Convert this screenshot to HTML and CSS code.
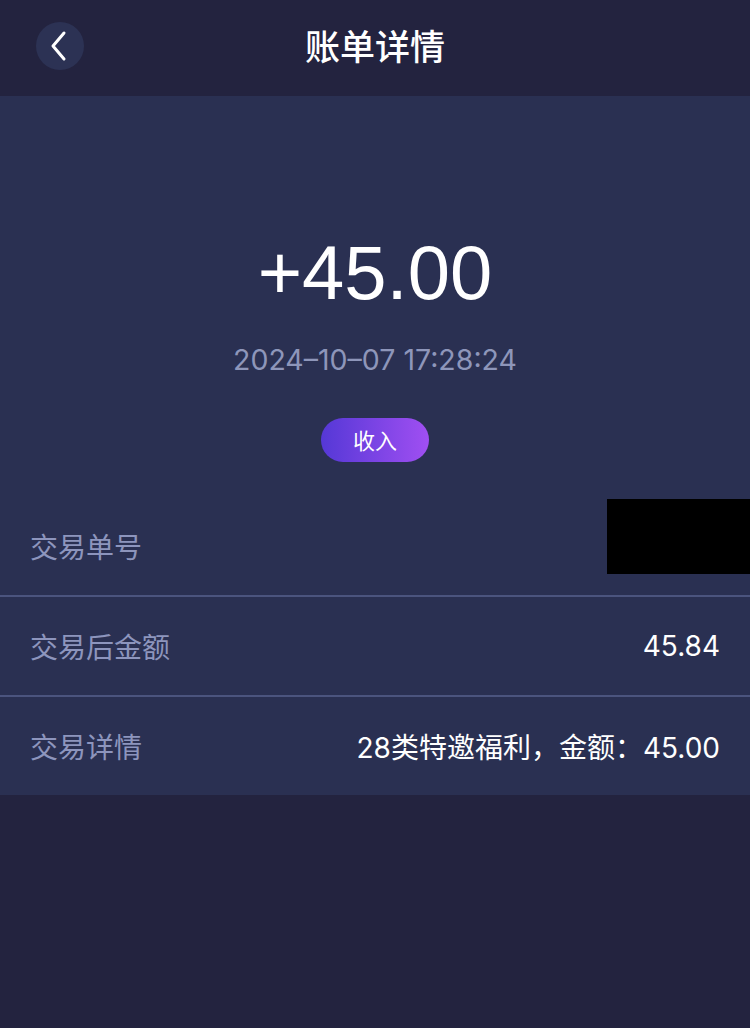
FILE: index.html
```html
<!DOCTYPE html>
<html lang="zh-CN">
<head>
    <meta charset="UTF-8">
    <meta name="viewport" content="width=device-width, initial-scale=1.0">
    <title>账单详情</title>
    <link rel="stylesheet" href="styles.css">
</head>
<body>
    <div class="header">
        <div class="back">
            <svg width="20" height="32" viewBox="0 0 20 32">
                <path d="M15 3 L4 16 L15 29" fill="none" stroke="#fff" stroke-width="3" stroke-linecap="round" stroke-linejoin="round"/>
            </svg>
        </div>
        <h1 class="title">账单详情</h1>
    </div>

    <div class="detail">
        <div class="summary">
            <div class="amount">+45.00</div>
            <div class="time">2024–10–07 17:28:24</div>
            <div class="tag">收入</div>
        </div>

        <div class="row first">
            <span class="label">交易单号</span>
            <span class="mask"></span>
        </div>
        <div class="row">
            <span class="label">交易后金额</span>
            <span class="value">45.84</span>
        </div>
        <div class="row">
            <span class="label">交易详情</span>
            <span class="value">28类特邀福利，金额：45.00</span>
        </div>
    </div>
</body>
</html>
```

FILE: styles.css
```css
/* Reset default styles */
* {
  margin: 0;
  padding: 0;
  box-sizing: border-box;
}

body {
  font-family: "Noto Sans", "Noto Sans CJK SC", sans-serif;
  color: white;
  background-color: #23233f;
  min-height: 1028px;
}

.header {
  position: relative;
  height: 96px;
  display: flex;
  align-items: center;
  justify-content: center;
}

.back {
  position: absolute;
  left: 36px;
  top: 22px;
  width: 48px;
  height: 48px;
  border-radius: 50%;
  background-color: #2c3254;
  display: flex;
  align-items: center;
  justify-content: center;
  padding-right: 3px;
}

.title {
  font-size: 35px;
  font-weight: 500;
  margin-top: -8px;
}

.detail {
  background-color: #2a3052;
}

.summary {
  display: flex;
  flex-direction: column;
  align-items: center;
  padding-top: 129px;
  padding-bottom: 34px;
}

.amount {
  font-family: "Liberation Sans", Arial, sans-serif;
  font-size: 76px;
  line-height: 96px;
}

.time {
  font-family: "Inter", "Liberation Sans", sans-serif;
  font-size: 28.5px;
  color: #8e96ba;
  margin-top: 20px;
  line-height: 38px;
}

.tag {
  margin-top: 39px;
  width: 108px;
  height: 44px;
  border-radius: 22px;
  background: linear-gradient(90deg, #5538d6, #a04ff2);
  font-size: 22px;
  line-height: 44px;
  text-align: center;
}

.row {
  position: relative;
  height: 100px;
  display: flex;
  align-items: center;
  justify-content: space-between;
  padding: 0 30px;
  border-top: 2px solid #4b547e;
}

.row.first {
  height: 99px;
  border-top: none;
}

.label {
  font-size: 28px;
  color: #8d95bd;
}

.value {
  font-family: "Inter", "Noto Sans", "Noto Sans CJK SC", sans-serif;
  font-size: 28px;
}

.mask {
  position: absolute;
  right: 0;
  top: 3px;
  width: 143px;
  height: 75px;
  background-color: #000;
}
```
